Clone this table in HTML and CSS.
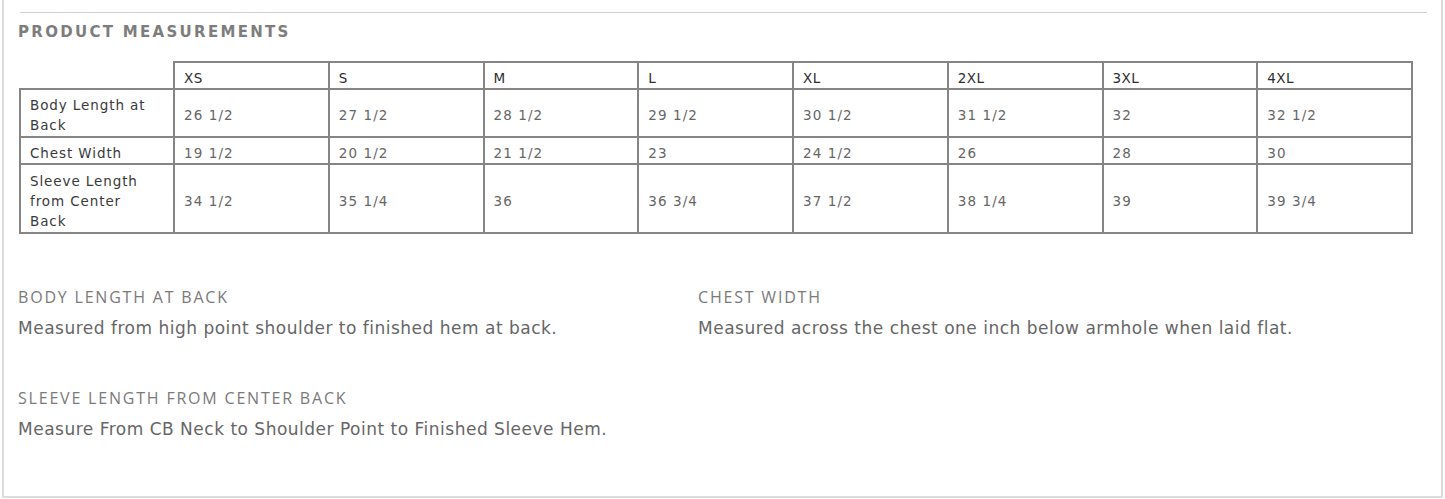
FILE: index.html
```html
<!DOCTYPE html>
<html>
<head>
<meta charset="utf-8">
<link rel="stylesheet" href="styles.css">
</head>
<body>
<div class="panel">
  <div class="rule"></div>
  <h2 class="title">PRODUCT MEASUREMENTS</h2>
  <table class="sizes">
    <colgroup>
      <col class="col-label">
      <col><col><col><col><col><col><col><col>
    </colgroup>
    <thead>
      <tr>
        <th class="blank"></th>
        <th>XS</th><th>S</th><th>M</th><th>L</th><th>XL</th><th>2XL</th><th>3XL</th><th>4XL</th>
      </tr>
    </thead>
    <tbody>
      <tr class="r1">
        <td class="label">Body Length at Back</td>
        <td>26 1/2</td><td>27 1/2</td><td>28 1/2</td><td>29 1/2</td><td>30 1/2</td><td>31 1/2</td><td>32</td><td>32 1/2</td>
      </tr>
      <tr class="r2">
        <td class="label">Chest Width</td>
        <td>19 1/2</td><td>20 1/2</td><td>21 1/2</td><td>23</td><td>24 1/2</td><td>26</td><td>28</td><td>30</td>
      </tr>
      <tr class="r3">
        <td class="label">Sleeve Length from Center Back</td>
        <td>34 1/2</td><td>35 1/4</td><td>36</td><td>36 3/4</td><td>37 1/2</td><td>38 1/4</td><td>39</td><td>39 3/4</td>
      </tr>
    </tbody>
  </table>
  <div class="notes">
    <div class="note">
      <div class="note-title">BODY LENGTH AT BACK</div>
      <div class="note-text">Measured from high point shoulder to finished hem at back.</div>
    </div>
    <div class="note">
      <div class="note-title">CHEST WIDTH</div>
      <div class="note-text">Measured across the chest one inch below armhole when laid flat.</div>
    </div>
    <div class="note">
      <div class="note-title">SLEEVE LENGTH FROM CENTER BACK</div>
      <div class="note-text">Measure From CB Neck to Shoulder Point to Finished Sleeve Hem.</div>
    </div>
  </div>
</div>
</body>
</html>
```
FILE: styles.css
```css
html, body {
  margin: 0;
  padding: 0;
  background: #fff;
}
.panel {
  margin-left: 2px;
  width: 1441px;
  height: 498px;
  border: 2px solid #dcdcdc;
  border-top: none;
  padding: 12px 16px 0 14px;
  box-sizing: border-box;
  font-family: "DejaVu Sans", Verdana, sans-serif;
}
.rule {
  height: 1px;
  background: #cfcfcf;
  margin-left: 2px;
  margin-right: -2px;
}
.title {
  margin: 10px 0 0 0;
  font-size: 15px;
  font-weight: bold;
  letter-spacing: 2.3px;
  color: #7d7d7d;
  line-height: 18px;
}
.sizes {
  margin-top: 20px;
  margin-left: 1px;
  border-collapse: collapse;
  table-layout: fixed;
  width: 1394px;
  font-size: 13.5px;
}
.sizes col.col-label {
  width: 154px;
}
.sizes th, .sizes td {
  border: 2px solid #858585;
  text-align: left;
  padding: 0 9px;
  font-weight: normal;
  vertical-align: middle;
}
.sizes th {
  height: 20px;
  color: #2e2e2e;
  padding-top: 5px;
  letter-spacing: 0.4px;
}
.sizes th.blank {
  border-top: none;
  border-left: none;
}
.sizes td {
  color: #666;
  line-height: 20px;
  letter-spacing: 1.1px;
  padding-top: 4px;
}
.sizes td.label {
  color: #3a3a3a;
  letter-spacing: 0.9px;
  padding-right: 20px;
}
.sizes tr.r1 td { height: 42px; }
.sizes tr.r2 td { height: 21px; }
.sizes tr.r3 td { height: 63px; }
.notes {
  display: grid;
  grid-template-columns: 680px 1fr;
  row-gap: 48px;
  margin-top: 52px;
}
.note-title {
  font-family: "Open Sans", sans-serif;
  font-size: 16px;
  letter-spacing: 1.8px;
  color: #7a7a7a;
  line-height: 22px;
}
.note-text {
  margin-top: 10px;
  font-size: 17px;
  color: #666;
  letter-spacing: 0.5px;
  line-height: 21px;
}
```
